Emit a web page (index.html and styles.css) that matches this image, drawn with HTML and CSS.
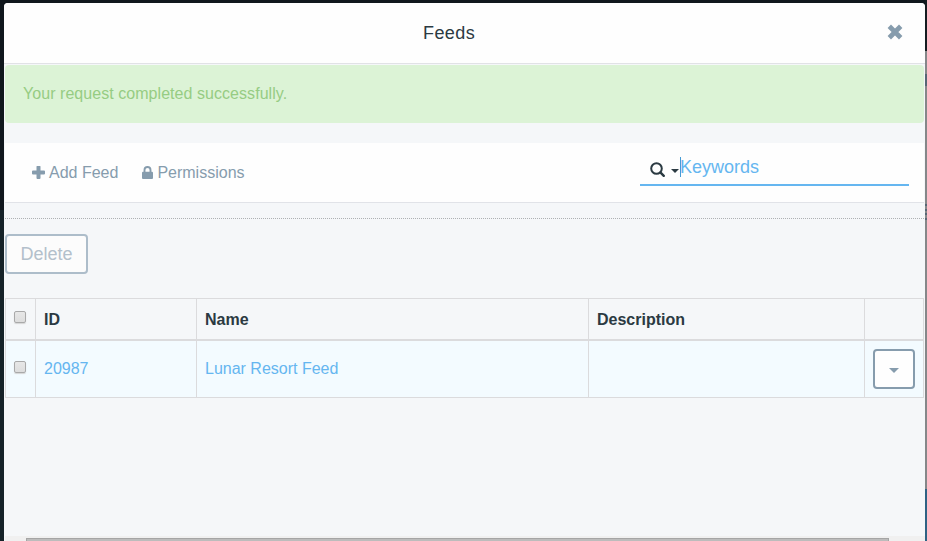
FILE: index.html
```html
<!DOCTYPE html>
<html lang="en">
<head>
<meta charset="utf-8">
<title>Feeds</title>
<link rel="stylesheet" href="styles.css">
</head>
<body>
<div class="modal">
  <header class="modal-header">
    <h1 class="title">Feeds</h1>
    <svg class="close" viewBox="0 0 18 18"><path d="M3.300 3.300l11.400 11.400M14.700 3.300L3.300 14.700" stroke="currentColor" stroke-width="4.800"/></svg>
  </header>
  <div class="modal-body">
    <div class="alert">Your request completed successfully.</div>
    <nav class="toolbar">
      <a class="tool add"><svg class="plus" viewBox="0 0 13 13"><path d="M5 0h3a.5.5 0 0 1 .5.5v4H12a1 1 0 0 1 1 1v2a1 1 0 0 1-1 1H8.500V12a1 1 0 0 1-1 1h-2a1 1 0 0 1-1-1V8.500H1a1 1 0 0 1-1-1v-2a1 1 0 0 1 1-1h3.500v-4A.5.5 0 0 1 5 0z" fill="currentColor"/></svg>Add Feed</a>
      <a class="tool"><svg class="lock" viewBox="0 0 11 13"><path d="M2.500 6V4a3 3 0 0 1 6 0v2" fill="none" stroke="currentColor" stroke-width="1.900"/><rect y="5.700" width="11" height="7.300" rx="1" fill="currentColor"/></svg>Permissions</a>
      <div class="search">
        <svg class="glass" viewBox="0 0 16 16"><circle cx="6.500" cy="6.500" r="5.300" fill="none" stroke="currentColor" stroke-width="2"/><path d="M10.600 10.600l3.200 3.200" stroke="currentColor" stroke-width="2.400" stroke-linecap="round"/></svg>
        <span class="caret"></span>
        <span class="cursor"></span>
        <span class="placeholder">Keywords</span>
      </div>
    </nav>
    <div class="divider"></div>
    <button class="delete">Delete</button>
    <table class="feeds">
      <colgroup><col class="c-check"><col class="c-id"><col class="c-name"><col class="c-desc"><col class="c-menu"></colgroup>
      <thead><tr><th class="check"><span class="box"></span></th><th>ID</th><th>Name</th><th>Description</th><th></th></tr></thead>
      <tbody><tr><td class="check"><span class="box"></span></td><td>20987</td><td>Lunar Resort Feed</td><td></td><td class="menu"><button class="drop"><span class="caret"></span></button></td></tr></tbody>
    </table>
  </div>
  <div class="scrollbar"><div class="thumb"></div></div>
</div>
<div class="page-edge"></div>
</body>
</html>
```
FILE: styles.css
```css
* { box-sizing: border-box; }
body {
  margin: 0;
  height: 541px;
  overflow: hidden;
  display: flex;
  padding: 3px 0 0 4px;
  background: linear-gradient(#10171d 0, #10171d 210px, #152228 210px);
  font: 16px/24px "Liberation Sans", Arial, sans-serif;
  color: #2b3a42;
}
.modal {
  width: 921px;
  height: 538px;
  flex: none;
  display: flex;
  flex-direction: column;
  background: #f5f7f9;
  border-radius: 4px 4px 0 0;
  overflow: hidden;
}
.page-edge {
  width: 2px;
  height: 541px;
  margin-top: -3px;
  background: linear-gradient(#151d21 0, #151d21 51px, #858789 51px, #858789 74px, #566675 74px, #566675 86px, #858789 86px, #858789 204px, #566675 204px, #566675 206px, #858789 206px, #858789 209px, #566675 209px, #566675 211px, #858789 211px, #858789 213px, #566675 213px, #566675 215px, #858789 215px, #858789 218px, #566675 218px, #566675 220px, #858789 220px, #858789 489px, #2e6284 489px);
}
.modal-header {
  height: 61px;
  flex: none;
  display: flex;
  align-items: center;
  background: #fefefe;
  border-bottom: 1px solid #e1e2e6;
  padding: 0 21px 1px 419px;
  justify-content: space-between;
}
.title { margin: 0; font-size: 18px; font-weight: 400; line-height: 24px; letter-spacing: .4px; }
.close { width: 18px; height: 18px; margin-bottom: 2px; color: #869cad; }
.modal-body { flex: 1; padding: 1px 1px 0; }
.alert {
  height: 58px;
  padding: 17px 18px;
  border-radius: 4px;
  background: #dcf3d6;
  color: #96cc83;
  letter-spacing: .05px;
}
.toolbar {
  height: 60px;
  margin-top: 20px;
  padding: 0 15px 0 27px;
  display: flex;
  background: #fefefe;
  border-bottom: 1px solid #e1e3e8;
  color: #869cad;
}
.tool { display: flex; align-items: center; height: 60px; }
.add { margin-right: 24px; }
.plus { width: 13px; height: 13px; margin: 0 4px 2px 0; }
.lock { width: 11px; height: 13px; margin: 0 4px 2px 0; }
.search {
  width: 269px;
  height: 34px;
  margin: 9px 0 0 auto;
  padding-left: 10px;
  display: flex;
  align-items: flex-start;
  border-bottom: 2px solid #65b6f0;
  color: #2b3a42;
}
.glass { width: 16px; height: 16px; margin: 10px 5px 0 0; }
.caret {
  width: 0;
  height: 0;
  border: 4px solid transparent;
  border-top-color: currentColor;
  border-bottom: 0;
}
.search .caret { margin-top: 17px; }
.cursor { width: 1px; height: 20px; margin: 5px 0 0 1px; background: #459bd5; }
.placeholder { font-size: 18px; line-height: 24px; margin: 3px 0 0 -1px; color: #65b6f0; }
.divider { height: 1px; margin: 15px -1px 0 0; background: repeating-linear-gradient(90deg, #aeb1b3 0, #aeb1b3 1px, transparent 1px, transparent 2px); }
.delete {
  display: block;
  width: 83px;
  height: 40px;
  margin: 15px 0 24px;
  padding: 0;
  border: 2px solid #adbdca;
  border-radius: 4px;
  background: #fcfcfc;
  color: #b3c0cb;
  font: 18px/24px "Liberation Sans", Arial, sans-serif;
}
.feeds { width: 919px; table-layout: fixed; border-collapse: separate; border-spacing: 0; border: solid #dbdbdd; border-width: 1px 0 0 1px; }
.c-check { width: 30px; }
.c-id { width: 161px; }
.c-name { width: 392px; }
.c-desc { width: 276px; }
.c-menu { width: 59px; }
.feeds th, .feeds td { padding: 0 8px; text-align: left; border: solid #dbdbdd; border-width: 0 1px 1px 0; }
.feeds th { height: 42px; padding-top: 2px; border-bottom-width: 2px; }
.feeds td { height: 57px; background: #f3fbff; color: #65b6f0; }
.feeds .menu { padding: 0 0 0 8px; }
.box {
  display: block;
  width: 12px;
  height: 12px;
  border: 1px solid #a9a9a9;
  border-radius: 2px;
  background: linear-gradient(#e7e7e7, #dddddd);
  box-shadow: 0 1px 1px #d5d5d5;
}
th .box { margin-bottom: 7px; }
td .box { margin-bottom: 4px; }
.drop {
  display: flex;
  align-items: center;
  justify-content: center;
  width: 42px;
  height: 40px;
  padding: 2px 0 0;
  border: 2px solid #869cad;
  border-radius: 4px;
  background: #fefefe;
  color: #869cad;
}
.drop .caret { border-width: 5px 5px 0; }
.scrollbar { height: 5px; margin-left: 1px; padding: 2px 36px 0 21px; background: #f0f0f0; }
.thumb { height: 3px; background: #bcbcbc; border: solid #a5a5a5; border-width: 1px 1px 0; }
```
